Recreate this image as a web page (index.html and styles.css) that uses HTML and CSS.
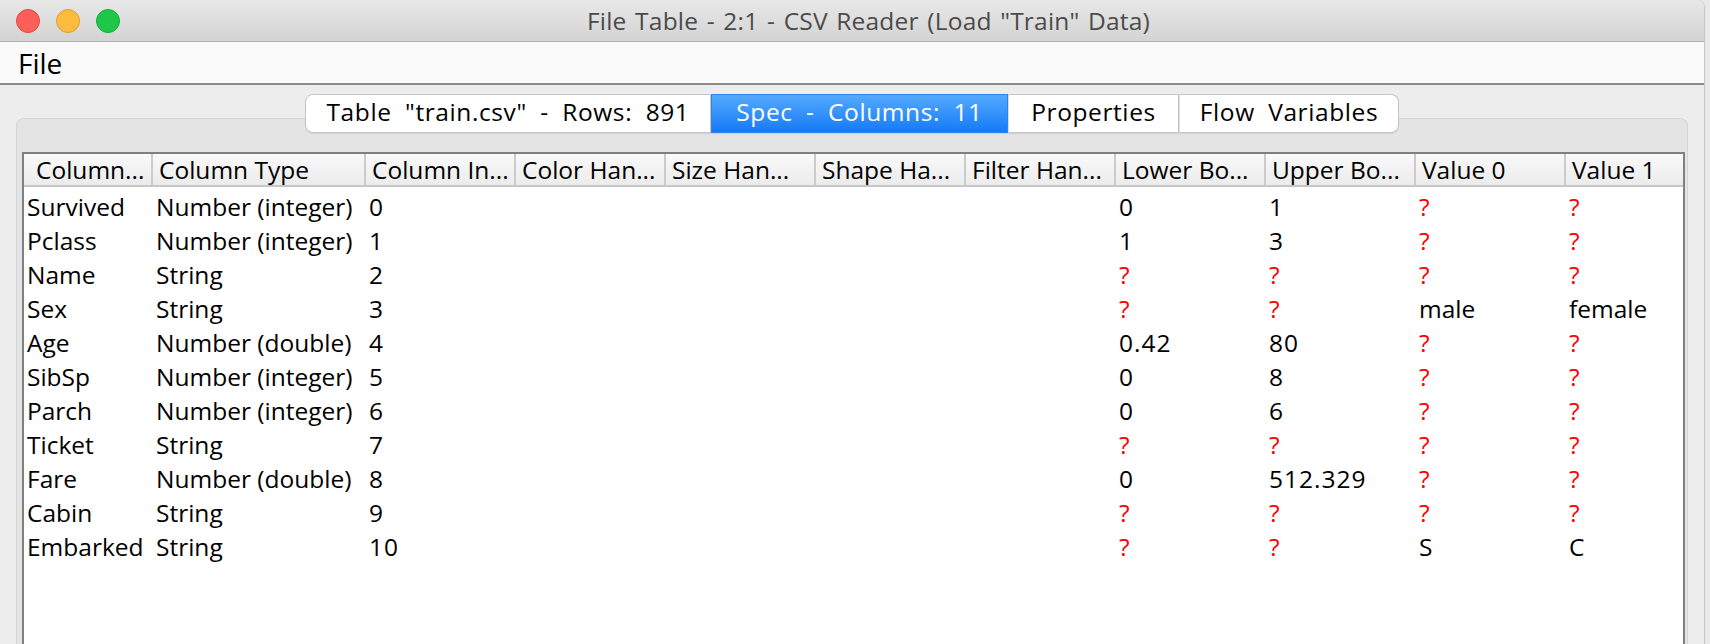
FILE: index.html
```html
<!DOCTYPE html>
<html lang="en">
<head>
    <meta charset="UTF-8">
    <meta name="viewport" content="width=device-width, initial-scale=1.0">
    <title>File Table - 2:1 - CSV Reader</title>
    <link rel="stylesheet" href="styles.css">
</head>
<body>
    <div class="window">
        <div class="titlebar">
            <div class="lights">
                <span class="light close"></span>
                <span class="light minimize"></span>
                <span class="light zoom"></span>
            </div>
            <div class="title">File Table - 2:1 - CSV Reader (Load "Train" Data)</div>
        </div>

        <div class="menubar">
            <span class="menu-item">File</span>
        </div>

        <div class="content">
            <div class="tabs">
                <div class="tab tab-table">Table "train.csv" - Rows: 891</div>
                <div class="tab tab-spec active">Spec - Columns: 11</div>
                <div class="tab tab-props">Properties</div>
                <div class="tab tab-flow">Flow Variables</div>
            </div>

            <div class="panel">
                <div class="table-box">
                    <table class="spec-table">
                        <colgroup>
                            <col class="c-name">
                            <col class="c-type">
                            <col class="c-std" span="8">
                            <col class="c-last">
                        </colgroup>
                        <thead>
                            <tr>
                                <th>Column...</th>
                                <th>Column Type</th>
                                <th>Column In...</th>
                                <th>Color Han...</th>
                                <th>Size Han...</th>
                                <th>Shape Ha...</th>
                                <th>Filter Han...</th>
                                <th>Lower Bo...</th>
                                <th>Upper Bo...</th>
                                <th>Value 0</th>
                                <th>Value 1</th>
                            </tr>
                        </thead>
                        <tbody id="spec-rows"></tbody>
                    </table>
                </div>
            </div>
        </div>
    </div>

    <script>
        // Column spec rows: name, type, index, lower, upper, value 0, value 1
        // null means missing value (shown as a red "?")
        const specs = [
            ['Survived', 'Number (integer)', 0, '0', '1', null, null],
            ['Pclass', 'Number (integer)', 1, '1', '3', null, null],
            ['Name', 'String', 2, null, null, null, null],
            ['Sex', 'String', 3, null, null, 'male', 'female'],
            ['Age', 'Number (double)', 4, '0.42', '80', null, null],
            ['SibSp', 'Number (integer)', 5, '0', '8', null, null],
            ['Parch', 'Number (integer)', 6, '0', '6', null, null],
            ['Ticket', 'String', 7, null, null, null, null],
            ['Fare', 'Number (double)', 8, '0', '512.329', null, null],
            ['Cabin', 'String', 9, null, null, null, null],
            ['Embarked', 'String', 10, null, null, 'S', 'C']
        ];

        function cell(value, numeric) {
            if (value === null) {
                return '<td class="missing">?</td>';
            }
            return `<td${numeric ? ' class="num"' : ''}>${value}</td>`;
        }

        const body = document.getElementById('spec-rows');
        body.innerHTML = specs.map(row => {
            const [name, type, index, lower, upper, v0, v1] = row;
            return `
                <tr>
                    <td>${name}</td>
                    <td>${type}</td>
                    ${cell(index, true)}
                    <td></td><td></td><td></td><td></td>
                    ${cell(lower, true)}
                    ${cell(upper, true)}
                    ${cell(v0, false)}
                    ${cell(v1, false)}
                </tr>
            `;
        }).join('');
    </script>
</body>
</html>
```

FILE: styles.css
```css
html, body {
    margin: 0;
    padding: 0;
    overflow: hidden;
}

body {
    font-family: "Lucida Grande", "Open Sans", sans-serif;
    font-size: 24.5px;
    color: #000;
    background: #e9e9e9;
}

.window {
    width: 1705px;
    height: 720px;
    display: flex;
    flex-direction: column;
    background: #ededed;
    border-right: 1px solid #c4c4c4;
    border-top-right-radius: 8px;
    box-sizing: border-box;
}

/* Title bar */
.titlebar {
    height: 41px;
    flex-shrink: 0;
    display: flex;
    align-items: center;
    background: linear-gradient(#e8e8e8, #d3d3d3);
    border-bottom: 1px solid #b3b3b3;
    border-top-right-radius: 8px;
}

.lights {
    display: flex;
    gap: 16px;
    padding-left: 16px;
}

.light {
    width: 24px;
    height: 24px;
    border-radius: 50%;
    box-sizing: border-box;
}

.light.close { background: #fc5f57; border: 1px solid #e04941; }
.light.minimize { background: #fdbb3f; border: 1px solid #df9e2c; }
.light.zoom { background: #1ec748; border: 1px solid #19ac39; }

.title {
    flex: 1;
    text-align: center;
    color: #4b4b4b;
    letter-spacing: 0.2px;
    word-spacing: 2px;
    padding-left: 33px;
    margin-right: 120px;
    line-height: 41px;
}

/* Menu bar */
.menubar {
    height: 41px;
    flex-shrink: 0;
    background: #fafafa;
    border-bottom: 2px solid #8c8c8c;
    display: flex;
    align-items: center;
}

.menu-item {
    font-size: 28px;
    padding-left: 18px;
    line-height: 41px;
    padding-top: 1px;
}

/* Content */
.content {
    flex: 1;
    display: flex;
    flex-direction: column;
    padding: 9px 16px 0 16px;
}

.tabs {
    display: flex;
    justify-content: center;
    position: relative;
    z-index: 1;
}

.tab {
    height: 39px;
    box-sizing: border-box;
    line-height: 34px;
    text-align: center;
    background: #fff;
    border: 1px solid #c6c6c6;
    border-left: 1px solid #dcdcdc;
    letter-spacing: 0.6px;
    word-spacing: 6.5px;
    white-space: nowrap;
    box-shadow: 0 1px 1px rgba(0, 0, 0, 0.08);
}

.tab:first-child {
    border-left: 1px solid #c6c6c6;
    border-radius: 8px 0 0 8px;
}

.tab:last-child {
    border-radius: 0 8px 8px 0;
}

.tab.active {
    color: #fff;
    background: linear-gradient(#55aaff, #157af6);
    border-color: #2d84f2;
}

.tab-table { width: 406px; }
.tab-spec { width: 297px; }
.tab-props { width: 171px; }
.tab-flow { width: 220px; }

.panel {
    flex: 1;
    display: flex;
    flex-direction: column;
    margin-top: -15px;
    padding: 33px 2px 0 5px;
    background: #e4e4e4;
    border: 1px solid #d6d6d6;
    border-bottom: none;
    border-radius: 8px 8px 0 0;
}

.table-box {
    flex: 1;
    background: #fff;
    border: 2px solid #808080;
    border-bottom: none;
    overflow: hidden;
}

/* Spec table */
.spec-table {
    table-layout: fixed;
    border-collapse: separate;
    border-spacing: 0;
    width: 1660px;
}

.c-name { width: 129px; }
.c-type { width: 213px; }
.c-std { width: 150px; }
.c-last { width: 118px; }

.spec-table th {
    height: 31px;
    line-height: 31px;
    padding: 0 0 0 6px;
    font-weight: normal;
    text-align: left;
    white-space: nowrap;
    overflow: hidden;
    background: linear-gradient(#fafafa, #ebebeb);
    border-right: 2px solid #cbcbcb;
    border-bottom: 2px solid #c6c6c6;
}

.spec-table th:first-child {
    padding-left: 12px;
}

.spec-table th:last-child {
    border-right: none;
}

.spec-table td {
    height: 34px;
    line-height: 34px;
    padding: 0 0 0 3px;
    white-space: nowrap;
    overflow: hidden;
}

.spec-table tbody tr:first-child td {
    padding-top: 3px;
}

.spec-table td.num {
    letter-spacing: 1px;
}

.spec-table td.missing {
    color: #ff0000;
}
```
